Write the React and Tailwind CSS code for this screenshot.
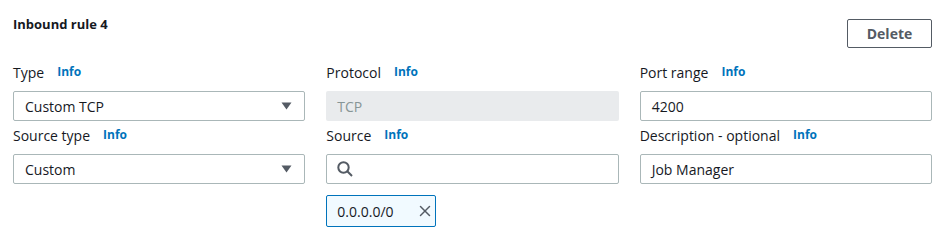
import { X } from "lucide-react";

function Label({ text }) {
  return (
    <div className="flex h-5 items-center">
      <span className="text-[14px] text-[#16191f]">{text}</span>
      <span className="ml-[13px] text-[12px] font-bold text-[#0073bb]">Info</span>
    </div>
  );
}

function Caret() {
  return (
    <svg width="11" height="8" viewBox="0 0 11 8" className="shrink-0">
      <path d="M0.5 0.5h10L5.5 7.5z" fill="#545b64" />
    </svg>
  );
}

function SelectBox({ value }) {
  return (
    <div className="mt-[9px] flex h-[30px] items-center justify-between rounded-[2px] border border-[#aab7b8] bg-white pl-[11px] pr-[12px]">
      <span className="text-[14px] text-[#16191f]">{value}</span>
      <Caret />
    </div>
  );
}

function TextBox({ value }) {
  return (
    <div className="mt-[9px] flex h-[30px] items-center rounded-[2px] border border-[#aab7b8] bg-white px-[11px]">
      <span className="text-[14px] text-[#16191f]">{value}</span>
    </div>
  );
}

function SearchBox() {
  return (
    <div className="mt-[9px] flex h-[30px] items-center rounded-[2px] border border-[#aab7b8] bg-white px-[10px]">
      <svg width="16" height="16" viewBox="0 0 16 16" fill="none">
        <circle cx="6.5" cy="6.5" r="5.2" stroke="#545b64" strokeWidth="2" />
        <path d="M10.3 10.3L15 15" stroke="#545b64" strokeWidth="2" />
      </svg>
    </div>
  );
}

export default function App() {
  return (
    <div
      className="w-[947px] h-[240px] bg-white px-[13px] pt-[14px]"
      style={{ fontFamily: '"Open Sans", "Noto Sans", sans-serif' }}
    >
      <div className="flex items-start justify-between pr-[2px]">
        <h2 className="h-5 text-[13px] font-bold leading-5 text-[#16191f]">Inbound rule 4</h2>
        <button className="mt-[5px] flex h-[29px] w-[85px] items-center justify-center rounded-[2px] border border-[#545b64] text-[14px] font-bold text-[#545b64]">
          Delete
        </button>
      </div>

      <div className="mt-[14px] grid grid-cols-3 gap-x-[21px] pr-[2px]">
        <div>
          <Label text="Type" />
          <SelectBox value="Custom TCP" />
          <div className="mt-1">
            <Label text="Source type" />
          </div>
          <SelectBox value="Custom" />
        </div>

        <div>
          <Label text="Protocol" />
          <div className="mt-[9px] flex h-[30px] items-center rounded-[2px] bg-[#e9ebed] px-[11px]">
            <span className="text-[14px] text-[#879596]">TCP</span>
          </div>
          <div className="mt-1">
            <Label text="Source" />
          </div>
          <SearchBox />
          <div className="mt-[11px] flex h-[32px] w-[110px] items-center justify-between rounded-[2px] border border-[#0073bb] bg-[#f1faff] pl-[10px] pr-[1px]">
            <span className="text-[14px] text-[#16191f]">0.0.0.0/0</span>
            <X size={18} strokeWidth={2} color="#545b64" />
          </div>
        </div>

        <div>
          <Label text="Port range" />
          <TextBox value="4200" />
          <div className="mt-1">
            <Label text="Description - optional" />
          </div>
          <TextBox value="Job Manager" />
        </div>
      </div>
    </div>
  );
}
